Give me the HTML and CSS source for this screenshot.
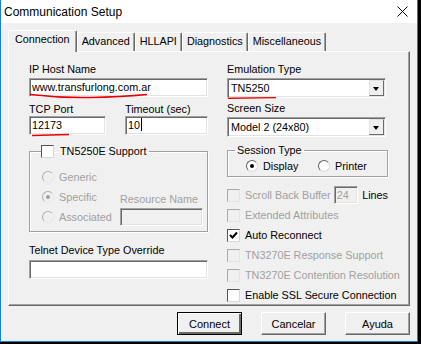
FILE: index.html
```html
<!DOCTYPE html>
<html lang="en">
<head>
  <meta charset="UTF-8" />
  <meta name="viewport" content="width=device-width, initial-scale=1.0"/>
  <title>Communication Setup</title>
  <link rel="stylesheet" href="styles.css">
</head>
<body>

  <div class="window">
    <div class="titlebar">
      <span class="title">Communication Setup</span>
      <svg class="close" width="11" height="11" viewBox="0 0 11 11"><path d="M0.5 0.5 10.5 10.5 M10.5 0.5 0.5 10.5" stroke="#000" stroke-width="1" fill="none"/></svg>
    </div>

    <div class="frame">
      <div class="tabs">
        <div class="tab active">Connection</div>
        <div class="tab">Advanced</div>
        <div class="tab">HLLAPI</div>
        <div class="tab">Diagnostics</div>
        <div class="tab">Miscellaneous</div>
      </div>

      <div class="panel">
        <div class="col col-left">
          <div class="lbl">IP Host Name</div>
          <div class="edit">www.transfurlong.com.ar</div>

          <div class="pair">
            <div class="port">
              <div class="lbl">TCP Port</div>
              <div class="edit">12173</div>
            </div>
            <div class="timeout">
              <div class="lbl">Timeout (sec)</div>
              <div class="edit">10<span class="caret"></span></div>
            </div>
          </div>

          <fieldset class="group tn-group">
            <legend><span class="check"></span>TN5250E Support</legend>
            <div class="radios">
              <div class="opt disabled"><span class="radio"></span>Generic</div>
              <div class="opt disabled"><span class="radio on"></span>Specific</div>
              <div class="opt disabled"><span class="radio"></span>Associated</div>
            </div>
            <div class="resource disabled">
              <div class="lbl">Resource Name</div>
              <div class="edit"></div>
            </div>
          </fieldset>

          <div class="lbl override-lbl">Telnet Device Type Override</div>
          <div class="edit"></div>
        </div>

        <div class="col col-right">
          <div class="lbl">Emulation Type</div>
          <div class="combo"><span class="combo-text">TN5250</span><span class="drop"></span></div>
          <div class="lbl size-lbl">Screen Size</div>
          <div class="combo"><span class="combo-text">Model 2 (24x80)</span><span class="drop"></span></div>

          <fieldset class="group session-group">
            <legend>Session Type</legend>
            <div class="session-opts">
              <div class="opt display"><span class="radio on"></span>Display</div>
              <div class="opt"><span class="radio"></span>Printer</div>
            </div>
          </fieldset>

          <div class="checks">
            <div class="opt disabled">
              <span class="check"></span>Scroll Back Buffer
              <span class="edit small">24</span>
              <span class="lines">Lines</span>
            </div>
            <div class="opt disabled"><span class="check"></span>Extended Attributes</div>
            <div class="opt"><span class="check"><svg width="9" height="9" viewBox="0 0 9 9"><path d="M1 4 3.5 6.5 8 1.5" stroke="#000" stroke-width="2" fill="none"/></svg></span>Auto Reconnect</div>
            <div class="opt disabled"><span class="check"></span>TN3270E Response Support</div>
            <div class="opt disabled"><span class="check"></span>TN3270E Contention Resolution</div>
            <div class="opt"><span class="check"></span>Enable SSL Secure Connection</div>
          </div>
        </div>
      </div>

      <div class="buttons">
        <button class="btn default">Connect</button>
        <button class="btn">Cancelar</button>
        <button class="btn">Ayuda</button>
      </div>
    </div>

    <!-- red pen marks drawn over the dialog -->
    <svg class="marks" width="421" height="344" viewBox="0 0 421 344">
      <path d="M30 94.5 Q60 98 90 97.5 T147 94.5" stroke="#e80000" stroke-width="1.6" fill="none"/>
      <path d="M32 135.5 Q50 135.2 69 134.5" stroke="#e80000" stroke-width="1.6" fill="none"/>
      <path d="M228 98.2 L276 97.6" stroke="#e80000" stroke-width="1.4" fill="none"/>
    </svg>
  </div>

</body>
</html>
```

FILE: styles.css
```css
* {
  box-sizing: border-box;
}
body {
  margin: 0;
  background: #000;
  font-family: "Liberation Sans", Arial, sans-serif;
  font-size: 10.8px;
  color: #000;
}
.window {
  position: relative;
  width: 418px;
  height: 342px;
  background: #f0f0f0;
  border: 1px solid #1c7ed6;
  border-top: 0;
}
.titlebar {
  display: flex;
  align-items: center;
  height: 23px;
  padding-left: 3px;
  background: #fff;
}
.title {
  font-size: 12px;
}
.close {
  margin-left: auto;
  margin-right: 9px;
}
.frame {
  padding: 7px 7px 0 7px;
}

/* tabs */
.tabs {
  display: flex;
  align-items: flex-end;
  height: 21px;
}
.tab {
  position: relative;
  height: 19px;
  line-height: 17px;
  padding: 0 4px;
  border: 1px solid;
  border-color: #fff #696969 transparent #fff;
  border-bottom: 0;
  box-shadow: inset -1px 0 #a0a0a0;
  border-radius: 2px 2px 0 0;
  white-space: nowrap;
}
.tab.active {
  height: 22px;
  padding: 0 6px;
  margin-bottom: -1px;
  background: #f0f0f0;
  z-index: 1;
}

/* tab page */
.panel {
  display: flex;
  gap: 19px;
  height: 255px;
  padding: 11px 0 0 20px;
  border: 1px solid;
  border-color: #fff #696969 #696969 #fff;
  box-shadow: inset -1px -1px #a0a0a0;
}
.col-left {
  width: 179px;
}
.col-right {
  width: 161px;
}
.lbl {
  line-height: 13px;
  white-space: nowrap;
}
.edit {
  height: 19px;
  margin-top: 2px;
  padding: 1px 2px;
  line-height: 15px;
  background: #fff;
  border: 1px solid;
  border-color: #a0a0a0 #fff #fff #a0a0a0;
  box-shadow: inset 1px 1px #696969, inset -1px -1px #e3e3e3;
  white-space: nowrap;
}
.caret {
  display: inline-block;
  width: 1px;
  height: 13px;
  margin-left: 1px;
  vertical-align: -2px;
  background: #000;
}
.pair {
  display: flex;
  gap: 19px;
  margin-top: 6px;
}
.pair .edit {
  margin-top: 0;
}
.port {
  width: 77px;
}
.timeout {
  width: 83px;
}

/* group boxes */
.group {
  margin: 0;
  min-width: 0;
  border: 1px solid #a0a0a0;
  box-shadow: 1px 1px #fff, inset 1px 1px #fff;
}
.group legend {
  display: flex;
  align-items: center;
  height: 13px;
  line-height: 13px;
  padding: 0 3px 0 0;
}
.tn-group {
  display: flex;
  margin-top: 10px;
  padding: 9px 4px 4px 11px;
}
.radios {
  width: 78px;
  margin-left: 1px;
}
.opt {
  display: flex;
  align-items: center;
  height: 20px;
  white-space: nowrap;
}
.disabled,
.disabled .lbl {
  color: #a0a0a0;
}
.resource {
  align-self: flex-end;
  width: 83px;
  margin-bottom: 1px;
}
.resource .edit,
.edit.small {
  height: 18px;
  background: #f0f0f0;
}
.override-lbl {
  margin-top: 12px;
}
.override-lbl + .edit {
  margin-top: 3px;
}

/* checkboxes and radios */
.check {
  display: flex;
  flex: none;
  align-items: center;
  justify-content: center;
  width: 13px;
  height: 13px;
  margin-right: 6px;
  background: #fff;
  border: 1px solid;
  border-color: #555 #d8d8d8 #d8d8d8 #555;
}
.disabled .check {
  background: #f0f0f0;
  border-color: #a8a8a8 #e3e3e3 #e3e3e3 #a8a8a8;
}
.radio {
  position: relative;
  flex: none;
  width: 12px;
  height: 12px;
  margin-right: 5px;
  border-radius: 50%;
  background: #fff;
  border: 1px solid;
  border-color: #606060 #dcdcdc #dcdcdc #606060;
}
.radio.on::after {
  content: "";
  position: absolute;
  left: 3px;
  top: 3px;
  width: 4px;
  height: 4px;
  border-radius: 50%;
  background: #000;
}
.disabled .radio {
  background: #f0f0f0;
  border-color: #b0b0b0 #e8e8e8 #e8e8e8 #b0b0b0;
}
.disabled .radio.on::after {
  background: #a0a0a0;
}

/* right column */
.combo {
  display: flex;
  width: 159px;
  height: 20px;
  margin-top: 2px;
  padding: 1px;
  background: #fff;
  border: 1px solid;
  border-color: #a0a0a0 #fff #fff #a0a0a0;
  box-shadow: inset 1px 1px #696969, inset -1px -1px #e3e3e3;
}
.combo-text {
  flex: 1;
  padding-left: 2px;
  line-height: 16px;
}
.drop {
  position: relative;
  width: 15px;
  background: #f0f0f0;
  border: 1px solid;
  border-color: #e3e3e3 #696969 #696969 #e3e3e3;
}
.drop::after {
  content: "";
  position: absolute;
  left: 3px;
  top: 6px;
  border-left: 3.5px solid transparent;
  border-right: 3.5px solid transparent;
  border-top: 4px solid #000;
}
.size-lbl {
  margin-top: 4px;
}
.session-group {
  margin-top: 7px;
  padding: 0 0 1px 7px;
}
.session-group legend {
  padding: 0 2px;
}
.session-opts {
  display: flex;
  margin-left: 11px;
}
.session-opts .opt {
  height: 18px;
}
.session-opts .display {
  width: 72px;
}
.checks {
  margin-top: 8px;
}
.checks .check {
  margin-right: 5px;
}
.edit.small {
  display: inline-block;
  width: 30px;
  margin: 0 4px 0 3px;
  padding: 1px 2px;
  color: #a0a0a0;
}
.lines {
  color: #000;
}

/* dialog buttons */
.buttons {
  display: flex;
  justify-content: flex-end;
  gap: 19px;
  margin-top: 6px;
}
.btn {
  width: 65px;
  height: 23px;
  padding: 0;
  font-family: inherit;
  font-size: 11px;
  background: #f0f0f0;
  border: 1px solid;
  border-color: #fff #696969 #696969 #fff;
  box-shadow: inset -1px -1px #a0a0a0;
}
.btn.default {
  border: 1px solid #000;
  box-shadow: inset 1px 1px #fff, inset -2px -2px #696969;
}

.marks {
  position: absolute;
  left: -1px;
  top: 0;
  pointer-events: none;
}
```
